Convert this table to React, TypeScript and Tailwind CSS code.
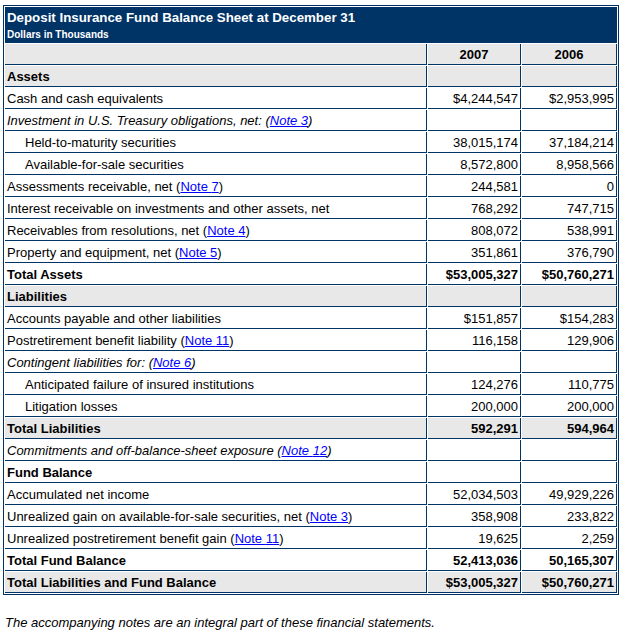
import React from 'react';

type Row = {
  label: React.ReactNode;
  a?: string;
  b?: string;
  kind?: 'section' | 'total' | 'grandtotal' | 'head' | 'italic' | 'indent';
};

const Note = ({ n }: { n: string }) => (
  <>
    (<a href="#" className="text-[#0000ff] underline">Note {n}</a>)
  </>
);

const rows: Row[] = [
  { label: '', a: '2007', b: '2006', kind: 'head' },
  { label: 'Assets', kind: 'section' },
  { label: 'Cash and cash equivalents', a: '$4,244,547', b: '$2,953,995' },
  { label: <>Investment in U.S. Treasury obligations, net: <Note n="3" /></>, kind: 'italic' },
  { label: 'Held-to-maturity securities', a: '38,015,174', b: '37,184,214', kind: 'indent' },
  { label: 'Available-for-sale securities', a: '8,572,800', b: '8,958,566', kind: 'indent' },
  { label: <>Assessments receivable, net <Note n="7" /></>, a: '244,581', b: '0' },
  { label: 'Interest receivable on investments and other assets, net', a: '768,292', b: '747,715' },
  { label: <>Receivables from resolutions, net <Note n="4" /></>, a: '808,072', b: '538,991' },
  { label: <>Property and equipment, net <Note n="5" /></>, a: '351,861', b: '376,790' },
  { label: 'Total Assets', a: '$53,005,327', b: '$50,760,271', kind: 'total' },
  { label: 'Liabilities', kind: 'section' },
  { label: 'Accounts payable and other liabilities', a: '$151,857', b: '$154,283' },
  { label: <>Postretirement benefit liability <Note n="11" /></>, a: '116,158', b: '129,906' },
  { label: <>Contingent liabilities for: <Note n="6" /></>, kind: 'italic' },
  { label: 'Anticipated failure of insured institutions', a: '124,276', b: '110,775', kind: 'indent' },
  { label: 'Litigation losses', a: '200,000', b: '200,000', kind: 'indent' },
  { label: 'Total Liabilities', a: '592,291', b: '594,964', kind: 'grandtotal' },
  { label: <>Commitments and off-balance-sheet exposure <Note n="12" /></>, kind: 'italic' },
  { label: 'Fund Balance', kind: 'total' },
  { label: 'Accumulated net income', a: '52,034,503', b: '49,929,226' },
  { label: <>Unrealized gain on available-for-sale securities, net <Note n="3" /></>, a: '358,908', b: '233,822' },
  { label: <>Unrealized postretirement benefit gain <Note n="11" /></>, a: '19,625', b: '2,259' },
  { label: 'Total Fund Balance', a: '52,413,036', b: '50,165,307', kind: 'total' },
  { label: 'Total Liabilities and Fund Balance', a: '$53,005,327', b: '$50,760,271', kind: 'grandtotal' },
];

export default function App() {
  return (
    <div className="min-h-screen bg-white pl-[3px] pt-[5px] text-[13px] text-black" style={{ fontFamily: '"Liberation Sans", Arial, sans-serif' }}>
      <div className="w-[616px] border border-[#003366] p-px flex flex-col gap-px bg-white">
        {/* Titel */}
        <div className="h-[36px] bg-[#003366] text-white font-bold pl-[2px] pt-[3px]">
          <div className="leading-[16px] text-[13.3px]">Deposit Insurance Fund Balance Sheet at December 31</div>
          <div className="leading-[12px] text-[10px] mt-[3px]">Dollars in Thousands</div>
        </div>

        {rows.map((r, i) => {
          const gray = r.kind === 'section' || r.kind === 'head' || r.kind === 'grandtotal';
          const bold = r.kind === 'section' || r.kind === 'head' || r.kind === 'total' || r.kind === 'grandtotal';
          const bg = gray ? 'bg-[#e8e8e8]' : 'bg-white';
          const cell = `h-[21px] border-r border-b border-[#003366] flex items-center leading-[15px] whitespace-nowrap ${bg} ${bold ? 'font-bold' : ''}`;
          return (
            <div key={i} className="flex gap-px">
              <div
                className={`${cell} w-[422px] ${r.kind === 'indent' ? 'pl-[20px]' : 'pl-[2px]'} ${r.kind === 'italic' ? 'italic' : ''}`}
              >
                {r.label}
              </div>
              <div className={`${cell} w-[93px] ${r.kind === 'head' ? 'justify-center' : 'justify-end pr-[2px]'}`}>
                {r.a}
              </div>
              <div className={`${cell} w-[95px] ${r.kind === 'head' ? 'justify-center' : 'justify-end pr-[2px]'}`}>
                {r.b}
              </div>
            </div>
          );
        })}
      </div>

      <p className="mt-[20px] pl-[2px] italic leading-[15px]">
        The accompanying notes are an integral part of these financial statements.
      </p>
    </div>
  );
}
